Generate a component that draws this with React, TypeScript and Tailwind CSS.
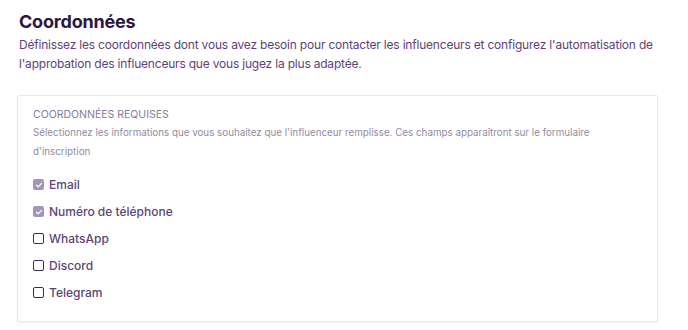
const fields = [
  { label: "Email", checked: true, locked: true },
  { label: "Numéro de téléphone", checked: true, locked: true },
  { label: "WhatsApp", checked: false, locked: false },
  { label: "Discord", checked: false, locked: false },
  { label: "Telegram", checked: false, locked: false },
];

function Box({ checked, locked }: { checked: boolean; locked: boolean }) {
  if (checked && locked) {
    return (
      <span className="w-[11px] h-[11px] rounded-[2px] bg-[#a596b5] flex items-center justify-center shrink-0">
        <svg width="8" height="8" viewBox="0 0 8 8" fill="none">
          <path d="M1.5 4.2 L3.2 5.8 L6.5 2.3" stroke="#ffffff" strokeWidth="1.2" strokeLinecap="round" strokeLinejoin="round" />
        </svg>
      </span>
    );
  }
  return <span className="w-[11px] h-[11px] rounded-[2px] border-[1.5px] border-[#3d2a52] bg-white shrink-0" />;
}

export default function App() {
  return (
    <main className="w-[688px] h-[330px] bg-white font-['Inter',sans-serif] pt-[11px] pl-[19px] pr-[20px]">
      <h1 className="text-[18px] leading-[22px] font-bold text-[#2b1742] tracking-[-0.2px]">Coordonnées</h1>
      <p className="mt-[2px] text-[12px] leading-[19px] text-[#5e3f78] tracking-[-0.2px] whitespace-nowrap">
        Définissez les coordonnées dont vous avez besoin pour contacter les influenceurs et configurez l'automatisation de
        <br />
        l'approbation des influenceurs que vous jugez la plus adaptée.
      </p>

      <section className="mt-[22px] -ml-[2px] w-[641px] border border-[#ebe8f1] rounded-[2px] shadow-[0_1px_2px_rgba(60,40,90,0.08)] bg-white pl-[15px] pr-4 pt-[12px] pb-[21px]">
        <h2 className="text-[10.5px] leading-[14px] uppercase text-[#887c98]">Coordonnées requises</h2>
        <p className="mt-[1px] text-[9.8px] leading-[19px] text-[#938aa3]">
          Sélectionnez les informations que vous souhaitez que l'influenceur remplisse. Ces champs apparaîtront sur le formulaire
          <br />
          d'inscription
        </p>
        <ul className="mt-[16px] flex flex-col gap-[12px]">
          {fields.map((f) => (
            <li key={f.label} className="flex items-center gap-[5px] h-[15px]">
              <Box checked={f.checked} locked={f.locked} />
              <span className="text-[12px] font-medium text-[#5b4673]">{f.label}</span>
            </li>
          ))}
        </ul>
      </section>
    </main>
  );
}
